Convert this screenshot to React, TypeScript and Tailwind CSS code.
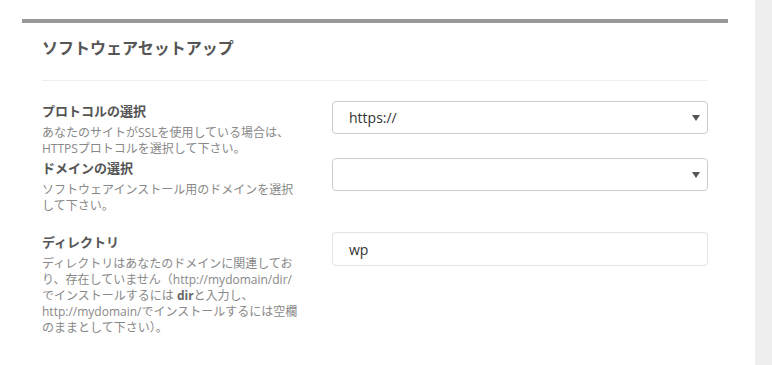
import { ChevronDown } from "lucide-react";

const font = { fontFamily: '"Open Sans", "Noto Sans CJK JP", sans-serif' };

function Caret() {
  return (
    <svg width="8" height="6" viewBox="0 0 8 6" className="shrink-0">
      <path d="M0 0 H8 L4 6 Z" fill="#555" />
    </svg>
  );
}

export default function App() {
  void ChevronDown;
  return (
    <div className="flex h-[365px] w-[772px] bg-white" style={font}>
      <div className="w-[755px] pl-[22px] pt-[19px]">
        <div className="w-[706px] border-t-4 border-[#999]">
          <div className="px-5">
            {/* title */}
            <div className="border-b border-[#eee] pt-[14px] pb-[21px]">
              <h2 className="text-[16px] leading-[22px] font-bold text-[#555]">ソフトウェアセットアップ</h2>
            </div>

            {/* protocol */}
            <div className="mt-5 flex justify-between">
              <div className="w-[262px]">
                <p className="text-[13px] leading-5 font-bold text-[#555]">プロトコルの選択</p>
                <p className="mt-1 text-[12px] leading-4 text-[#888] whitespace-nowrap">
                  あなたのサイトがSSLを使用している場合は、
                  <br />
                  HTTPSプロトコルを選択して下さい。
                </p>
              </div>
              <div className="flex h-[33px] w-[376px] items-center justify-between rounded border border-[#ccc] pl-4 pr-[7px] text-[14px] text-[#333]">
                <span>https://</span>
                <Caret />
              </div>
            </div>

            {/* domain */}
            <div className="mt-px flex justify-between">
              <div className="w-[262px]">
                <p className="text-[13px] leading-5 font-bold text-[#555]">ドメインの選択</p>
                <p className="mt-1 text-[12px] leading-4 text-[#888] whitespace-nowrap">
                  ソフトウェアインストール用のドメインを選択
                  <br />
                  して下さい。
                </p>
              </div>
              <div className="flex h-[33px] w-[376px] items-center justify-end rounded border border-[#ccc] pr-[7px]">
                <Caret />
              </div>
            </div>

            {/* directory */}
            <div className="mt-[18px] flex justify-between">
              <div className="w-[262px]">
                <p className="text-[13px] leading-5 font-bold text-[#555]">ディレクトリ</p>
                <p className="mt-1 text-[12px] leading-4 text-[#888] whitespace-nowrap">
                  ディレクトリはあなたのドメインに関連してお
                  <br />
                  り、存在していません（http://mydomain/dir/
                  <br />
                  でインストールするには <strong className="font-bold text-[#666]">dir</strong>と入力し、
                  <br />
                  http://mydomain/でインストールするには空欄
                  <br />
                  のままとして下さい）。
                </p>
              </div>
              <div className="flex h-[34px] w-[376px] items-center rounded border border-[#e3e3e3] pl-4 text-[14px] text-[#333]">
                wp
              </div>
            </div>
          </div>
        </div>
      </div>
      <div className="flex-1 bg-[#eee]" />
    </div>
  );
}
